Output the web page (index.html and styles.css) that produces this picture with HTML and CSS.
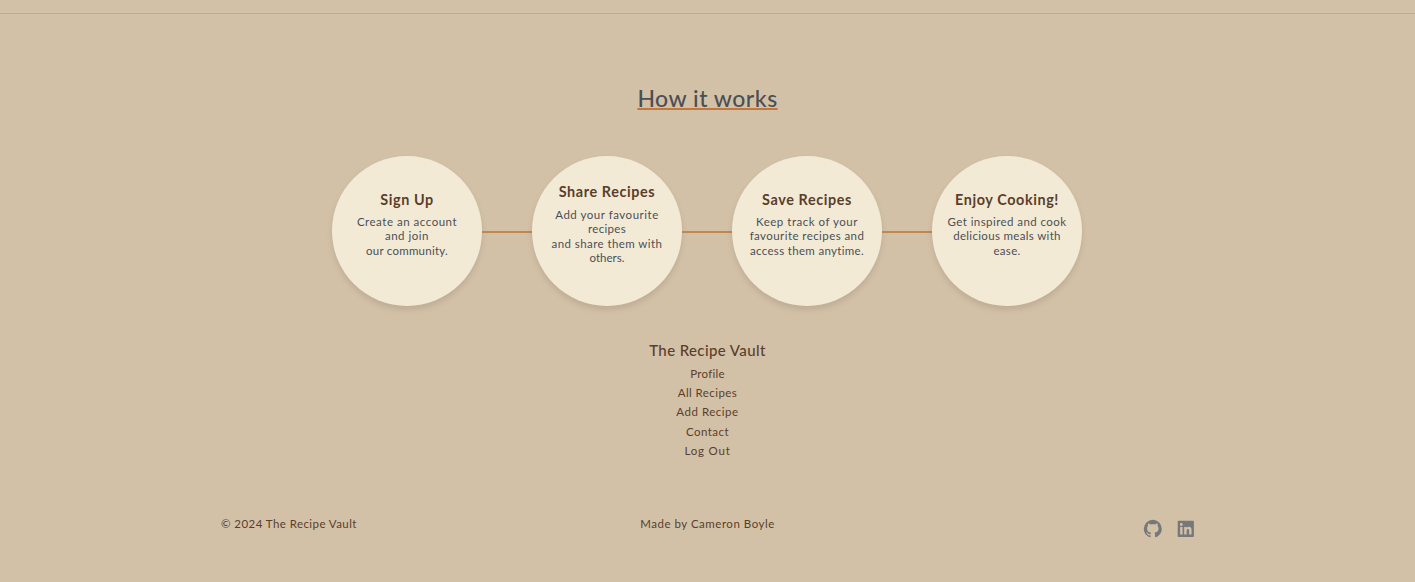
FILE: index.html
```html
<!DOCTYPE html>
<html lang="en">
<head>
<meta charset="utf-8">
<title>The Recipe Vault</title>
<link rel="stylesheet" href="styles.css">
</head>
<body>
<hr class="divider">
<section class="how">
  <h2 class="how-title">How it works</h2>
  <div class="steps">
    <article class="step"><h3>Sign Up</h3><p><span class="ls-5">Create an account</span><br><span class="ls-5">and join</span><br><span class="ls-2">our community.</span></p></article>
    <span class="link"></span>
    <article class="step step-tall"><h3>Share Recipes</h3><p><span class="ls-5">Add your favourite</span><br><span class="ls-3">recipes</span><br><span class="ls-4">and share them with</span><br><span>others.</span></p></article>
    <span class="link"></span>
    <article class="step"><h3>Save Recipes</h3><p><span class="ls-5">Keep track of your</span><br><span class="ls-4">favourite recipes and</span><br><span class="ls-3">access them anytime.</span></p></article>
    <span class="link"></span>
    <article class="step"><h3>Enjoy Cooking!</h3><p><span class="ls-4">Get inspired and cook</span><br><span class="ls-3">delicious meals with</span><br><span class="ls-3">ease.</span></p></article>
  </div>
</section>
<footer class="footer">
  <h4 class="brand">The Recipe Vault</h4>
  <nav class="nav"><a class="ls-2">Profile</a><a class="ls-4">All Recipes</a><a class="ls-5">Add Recipe</a><a class="ls-4">Contact</a><a class="ls-8">Log Out</a></nav>
  <div class="bottom">
    <span class="ls-4">© 2024 The Recipe Vault</span>
    <span class="ls-5">Made by Cameron Boyle</span>
    <div class="social">
      <svg viewBox="0 0 24 24"><path d="M12 2A10 10 0 0 0 2 12c0 4.42 2.87 8.17 6.84 9.5.5.08.66-.23.66-.5v-1.69c-2.77.6-3.36-1.34-3.36-1.34-.46-1.16-1.11-1.47-1.11-1.47-.91-.62.07-.6.07-.6 1 .07 1.53 1.03 1.53 1.03.87 1.52 2.34 1.07 2.91.83.09-.65.35-1.09.63-1.34-2.22-.25-4.55-1.11-4.55-4.92 0-1.11.38-2 1.03-2.71-.1-.25-.45-1.29.1-2.64 0 0 .84-.27 2.75 1.02.79-.22 1.65-.33 2.5-.33s1.71.11 2.5.33c1.91-1.29 2.75-1.02 2.75-1.02.55 1.35.2 2.39.1 2.64.65.71 1.03 1.6 1.03 2.71 0 3.82-2.34 4.66-4.57 4.91.36.31.69.92.69 1.85V21c0 .27.16.59.67.5C19.14 20.16 22 16.42 22 12A10 10 0 0 0 12 2z"/></svg>
      <svg viewBox="0 0 24 24"><path fill-rule="evenodd" d="M4 3h16a1 1 0 0 1 1 1v16a1 1 0 0 1-1 1H4a1 1 0 0 1-1-1V4a1 1 0 0 1 1-1zm1.700 7v8.300h2.700V10zM7 5.600a1.600 1.600 0 1 0 0 3.200 1.600 1.600 0 0 0 0-3.200zM10.200 10v8.300h2.700v-4.100c0-1.100.2-2.100 1.500-2.100s1.300 1.200 1.300 2.200v4h2.700v-4.600c0-2.200-.5-3.900-3.100-3.900-1.200 0-2.100.7-2.400 1.300V10z"/></svg>
    </div>
  </div>
</footer>
</body>
</html>
```
FILE: styles.css
```css
body { margin: 0; background: #d3c1a7; font-family: Lato, sans-serif; color: #5a3e2b; }
.divider { margin: 13px 0 0; border: 0; height: 1px; background: #bdab93; }
.how-title {
  margin: 69px 0 43px; text-align: center; font-size: 23px; font-weight: 500; line-height: 30px; color: #4b4f54;
  letter-spacing: 0.5px; text-decoration: underline 2.4px #c2783a; text-underline-offset: 1px;
}
.steps { display: flex; justify-content: center; align-items: center; padding-right: 1px; }
.step {
  box-sizing: border-box; width: 150px; height: 150px; padding-top: 34px; border-radius: 50%;
  background: #f3ead6; text-align: center; box-shadow: 0 4px 6px rgba(0, 0, 0, 0.1);
}
.step-tall { padding-top: 26px; }
.step h3 { margin: 0 0 5px; font-size: 14.4px; line-height: 20px; letter-spacing: 0.6px; }
.step-tall h3 { margin-bottom: 6px; }
.step p { margin: 0; font-size: 11.5px; line-height: 14.4px; color: #4b4f54; }
.link { width: 50px; height: 2px; margin-top: 2px; background: #c38750; }
.footer { text-align: center; }
.brand { margin: 34px 0 4px; font-size: 15px; line-height: 20px; font-weight: 500; letter-spacing: 0.4px; }
.nav { display: flex; flex-direction: column; align-items: center; font-size: 11.5px; line-height: 19.2px; }
.bottom {
  display: grid; grid-template-columns: 1fr auto 1fr; width: 973px; margin: 54px auto 0;
  font-size: 11.5px; line-height: 19px; text-align: left;
}
.social { display: flex; justify-content: flex-end; gap: 11px; margin: 4.4px -2.4px 0 0; }
.social svg { width: 21.6px; height: 21.6px; fill: #77787a; }
.ls-2 { letter-spacing: 0.24px; }
.ls-3 { letter-spacing: 0.33px; }
.ls-4 { letter-spacing: 0.43px; }
.ls-5 { letter-spacing: 0.52px; }
.ls-8 { letter-spacing: 0.8px; }
```
